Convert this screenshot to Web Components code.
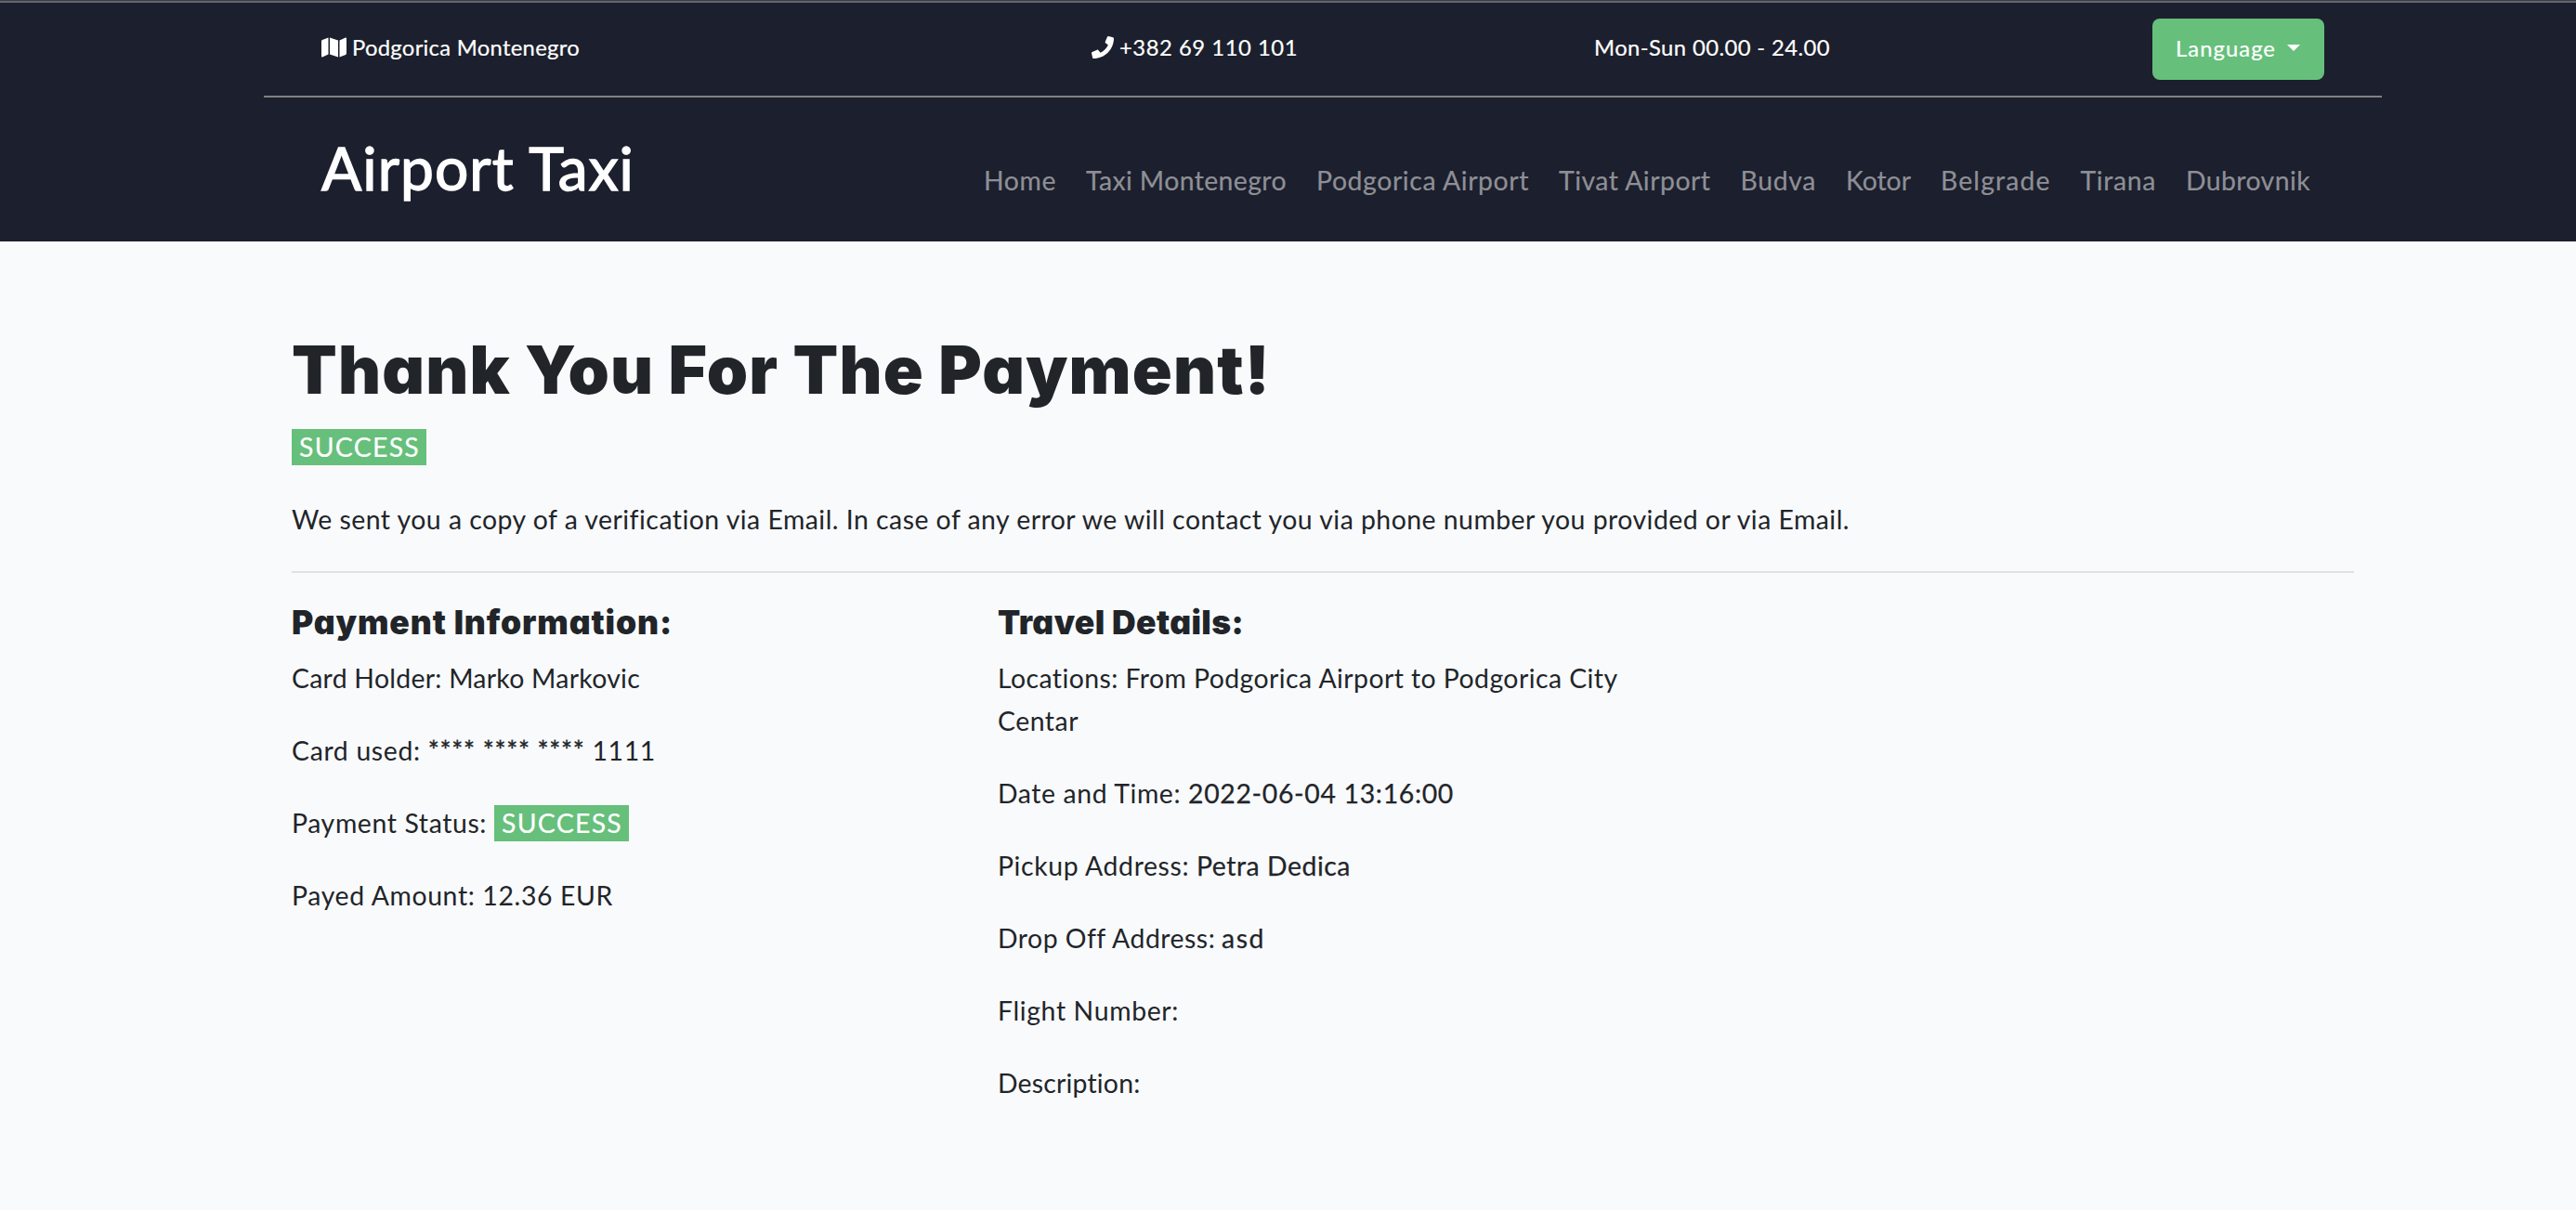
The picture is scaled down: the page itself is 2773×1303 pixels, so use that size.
<!DOCTYPE html>
<html lang="en">
<head>
<meta charset="utf-8">
<title>Airport Taxi</title>
<style>
html{background:#f9fafc}
body{margin:0;font-family:Lato,"Noto Sans",sans-serif;font-size:28.4px;line-height:46px;color:#212529;background:#f9fafc}
</style>
</head>
<body>
<taxi-page></taxi-page>
<script>
const component = (name, html, setup) => customElements.define(name, class extends HTMLElement {
  connectedCallback() {
    if (this.shadowRoot) return;
    this.attachShadow({mode: 'open'}).innerHTML = html.trim();
    if (setup) setup(this);
  }
});

component('taxi-page', `
<style>
:host{display:block}
</style>
<site-header></site-header>
<payment-receipt></payment-receipt>`);

component('site-header', `
<style>
:host{display:block;box-sizing:border-box;height:260px;background:#1c1f2d;color:#fff;border-top:1px solid #3a3b44}
.edge{height:2px;background:#66676c}
.wrap{width:2280px;margin-left:284px}
.top{box-sizing:border-box;height:102px;display:flex;align-items:flex-start;padding:17px 62px 0;border-bottom:2px solid #808080;font-size:23.8px;line-height:38px;-webkit-text-stroke:.2px #fff}
.top > *{flex:none}
.c{margin-top:12px;display:flex}
.place{width:829px}.phone{width:541px}.hours{width:601px}
.main{display:flex;padding:0 77px 0 62px;justify-content:space-between}
.brand{margin-top:38px;font-size:64px;line-height:76px;-webkit-text-stroke:1.4px #fff}
nav{margin-top:66px;display:flex;gap:32px;color:#8e8f96;line-height:46px;-webkit-text-stroke:.2px #8e8f96}
</style>
<div class="edge"></div>
<div class="wrap">
  <div class="top">
    <div class="c place"><svg-icon kind="map"></svg-icon><fit-text w="245">Podgorica Montenegro</fit-text></div>
    <div class="c phone"><svg-icon kind="phone"></svg-icon><fit-text w="192">+382 69 110 101</fit-text></div>
    <div class="c hours"><fit-text w="254">Mon-Sun 00.00 - 24.00</fit-text></div>
    <drop-button><fit-text w="108">Language</fit-text></drop-button>
  </div>
  <div class="main">
    <div class="brand"><fit-text w="337">Airport Taxi</fit-text></div>
    <nav>
      <fit-text w="78">Home</fit-text>
      <fit-text w="216">Taxi Montenegro</fit-text>
      <fit-text w="229">Podgorica Airport</fit-text>
      <fit-text w="163.5">Tivat Airport</fit-text>
      <fit-text w="81.5">Budva</fit-text>
      <fit-text w="70">Kotor</fit-text>
      <fit-text w="118.5">Belgrade</fit-text>
      <fit-text w="81.5">Tirana</fit-text>
      <fit-text w="134">Dubrovnik</fit-text>
    </nav>
  </div>
</div>`);

const icons = {
  map: ['0 0 576 512', 27, 'M0 117.66v346.32c0 11.32 11.43 19.06 21.94 14.86L160 416V32L20.12 87.95A32.006 32.006 0 0 0 0 117.66zM192 416l192 64V96L192 32v384zM554.06 33.16L416 96v384l139.88-55.95A31.996 31.996 0 0 0 576 394.34V48.02c0-11.32-11.43-19.06-21.94-14.86z'],
  phone: ['0 0 512 512', 24, 'M493.4 24.6l-104-24c-11.3-2.6-22.9 3.3-27.5 13.9l-48 112c-4.2 9.8-1.4 21.3 6.9 28l60.6 49.6c-36 76.7-98.9 140.5-177.2 177.2l-49.6-60.6c-6.8-8.3-18.2-11.1-28-6.9l-112 48C3.9 366.5-2 378.1.6 389.4l24 104C27.1 504.2 36.7 512 48 512c256.1 0 464-207.5 464-464 0-11.2-7.7-20.9-18.6-23.4z']
};
component('svg-icon', `
<style>:host{display:block;margin:7px 6px 0 0}svg{display:block;height:24px;fill:currentColor}</style>
<svg><path/></svg>`, el => {
  const [box, width, d] = icons[el.getAttribute('kind')];
  const svg = el.shadowRoot.querySelector('svg');
  svg.setAttribute('viewBox', box);
  svg.style.width = width + 'px';
  svg.firstElementChild.setAttribute('d', d);
});

component('drop-button', `
<style>
:host{display:flex;box-sizing:border-box;width:185px;height:66px;padding:13px 26px 0 25px;background:#66bf7b;border-radius:8px;justify-content:space-between;line-height:38px}
i{margin-top:15px;width:0;height:0;border:7px solid transparent;border-top-color:#fff;border-bottom:0}
</style>
<slot></slot><i></i>`);

component('status-badge', `
<style>
:host{display:inline-block;box-sizing:border-box;width:145px;height:39px;padding-left:8px;background:#66bf7b;color:#fff;line-height:38px;vertical-align:baseline;-webkit-text-stroke:.2px #fff}
</style>
<fit-text w="130">SUCCESS</fit-text>`);

component('payment-receipt', `
<style>
:host{display:block;width:2220px;margin-left:314px;padding-top:95px}
h1,h2,p{margin:0}
h1,h2{font-family:Inter,"Open Sans",sans-serif;font-weight:900;font-optical-sizing:none;font-feature-settings:"cv11","ss03"}
h1{font-size:71px;line-height:86px}
h2{font-size:35.5px;line-height:44px;margin-bottom:14px}
.badge{display:flex;margin-top:21px}
.intro{margin-top:35px}
hr{border:0;height:2px;background:#dfe1e3;margin:33px 0 32px}
.cols{display:flex}
.cols section{width:760px}
.cols p{display:flex;flex-wrap:wrap;align-items:baseline;width:700px;height:46px}
.cols p.two{height:92px}
p + p{margin-top:32px}
.stars{-webkit-text-stroke:.4px currentColor}
</style>
<h1><fit-text w="1054">Thank You For The Payment!</fit-text></h1>
<div class="badge"><status-badge></status-badge></div>
<p class="intro"><fit-text w="1677">We sent you a copy of a verification via Email. In case of any error we will contact you via phone number you provided or via Email.</fit-text></p>
<hr>
<div class="cols">
  <section>
    <h2><fit-text w="410">Payment Information:</fit-text></h2>
    <p><fit-text w="375">Card Holder: Marko Markovic</fit-text></p>
    <p><fit-text w="392">Card used: <span class="stars">**** **** ****</span> 1111</fit-text></p>
    <p><fit-text w="218">Payment Status:&nbsp;</fit-text><status-badge></status-badge></p>
    <p><fit-text w="346">Payed Amount: 12.36 EUR</fit-text></p>
  </section>
  <section>
    <h2><fit-text w="265">Travel Details:</fit-text></h2>
    <p class="two"><fit-text w="668">Locations: From Podgorica Airport to Podgorica City</fit-text><fit-text w="87">Centar</fit-text></p>
    <p><fit-text w="205">Date and Time:&nbsp;</fit-text><fit-text w="286" strong>2022-06-04 13:16:00</fit-text></p>
    <p><fit-text w="214">Pickup Address:&nbsp;</fit-text><fit-text w="166" strong>Petra Dedica</fit-text></p>
    <p><fit-text w="241">Drop Off Address:&nbsp;</fit-text><fit-text w="47" strong>asd</fit-text></p>
    <p><fit-text w="195">Flight Number:</fit-text></p>
    <p><fit-text w="154">Description:</fit-text></p>
  </section>
</div>`);

/* Spreads its text over a set advance width by adjusting the tracking. */
component('fit-text', `<style>
:host{display:inline-block;white-space:nowrap}
:host([strong]){-webkit-text-stroke:.25px currentColor}
</style><span><slot></slot></span>`, el => {
  const target = Number(el.getAttribute('w'));
  const natural = el.shadowRoot.querySelector('span').getBoundingClientRect().width;
  el.style.letterSpacing = (target - natural) / el.textContent.length + 'px';
  el.style.width = target + 'px';
});
</script>
</body>
</html>
